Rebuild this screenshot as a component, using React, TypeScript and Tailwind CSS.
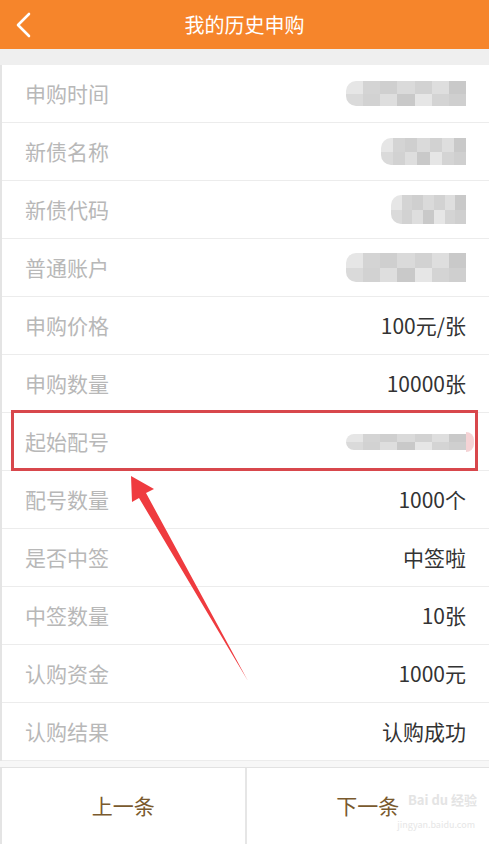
import React from "react"

type Row = { label: string; value?: string; blur?: { w: number; h: number; tail?: boolean } }

const rows: Row[] = [
  { label: "申购时间", blur: { w: 120, h: 25 } },
  { label: "新债名称", blur: { w: 85, h: 27 } },
  { label: "新债代码", blur: { w: 75, h: 29 } },
  { label: "普通账户", blur: { w: 120, h: 29 } },
  { label: "申购价格", value: "100元/张" },
  { label: "申购数量", value: "10000张" },
  { label: "起始配号", blur: { w: 120, h: 16, tail: true } },
  { label: "配号数量", value: "1000个" },
  { label: "是否中签", value: "中签啦" },
  { label: "中签数量", value: "10张" },
  { label: "认购资金", value: "1000元" },
  { label: "认购结果", value: "认购成功" },
]

const shades = ["#e6e6e6", "#d4d4d4", "#cfcfcf", "#dadada", "#d2d2d2", "#dedede", "#c9c9c9"]

function Blur({ w, h, tail }: { w: number; h: number; tail?: boolean }) {
  return (
    <div className="flex items-center">
      <div className="flex overflow-hidden rounded-l-[10px]" style={{ width: w, height: h }}>
        {shades.map((c, i) => (
          <div key={i} className="flex-1 flex flex-col">
            <div className="flex-1" style={{ background: c }} />
            <div className="flex-1" style={{ background: shades[(i + 3) % shades.length] }} />
          </div>
        ))}
      </div>
      {tail && <div className="w-[8px] h-[20px] rounded-r-full bg-[#f5d3d5] -mr-[8px]" />}
    </div>
  )
}

export default function App() {
  return (
    <div
      className="relative w-full h-[844px] flex flex-col overflow-hidden bg-white"
      style={{ fontFamily: '"Noto Sans CJK SC", "Noto Sans", sans-serif' }}
    >
      <header className="h-[49px] shrink-0 bg-[#f6852b] flex items-center relative">
        <svg className="absolute left-[14px] top-[12px]" width="20" height="26" viewBox="0 0 20 26">
          <path d="M15 2 L4 13 L15 24" fill="none" stroke="white" strokeWidth="2.6" strokeLinecap="round" strokeLinejoin="round" />
        </svg>
        <h1 className="w-full text-center text-white text-[20px] leading-none pt-[1px]">我的历史申购</h1>
      </header>

      <div className="h-[16px] shrink-0 bg-[#efefef]" />

      <div className="border-l-2 border-[#e4e4e4]">
        {rows.map((r) => (
          <div key={r.label} className="h-[58px] flex items-center justify-between pl-[23px] pr-[23px] border-b border-[#ececec]">
            <span className="text-[21px] text-[#b8b8b8] leading-none">{r.label}</span>
            {r.blur ? (
              <Blur {...r.blur} />
            ) : (
              <span className="text-[21px] text-[#333333] leading-none">{r.value}</span>
            )}
          </div>
        ))}
      </div>

      <div className="h-[7px] shrink-0 bg-[#f7f7f7] border-b border-[#e2e2e2]" />

      <div className="flex-1 flex border-l-2 border-[#e4e4e4]">
        <button className="flex-1 flex items-center justify-center text-[21px] text-[#7a5a2e] border-r-2 border-[#e6e6e6]">
          上一条
        </button>
        <button className="flex-1 flex items-center justify-center text-[21px] text-[#7a5a2e] relative">
          下一条
          <span className="absolute right-[12px] top-[22px] text-[13px] text-[#e4e4e4] font-bold">Bai du 经验</span>
          <span className="absolute right-[14px] top-[50px] text-[9px] text-[#e6e6e6]">jingyan.baidu.com</span>
        </button>
      </div>

      <div className="absolute left-[11px] top-[410px] w-[467px] h-[61px] border-[3px] border-[#d8474c]" />

      <svg className="absolute left-0 top-0 pointer-events-none" width="489" height="844" viewBox="0 0 489 844">
        <polygon points="131,476 154,489 146,493 248,681 139,498 132,502" fill="#ef3b3f" />
      </svg>
    </div>
  )
}
